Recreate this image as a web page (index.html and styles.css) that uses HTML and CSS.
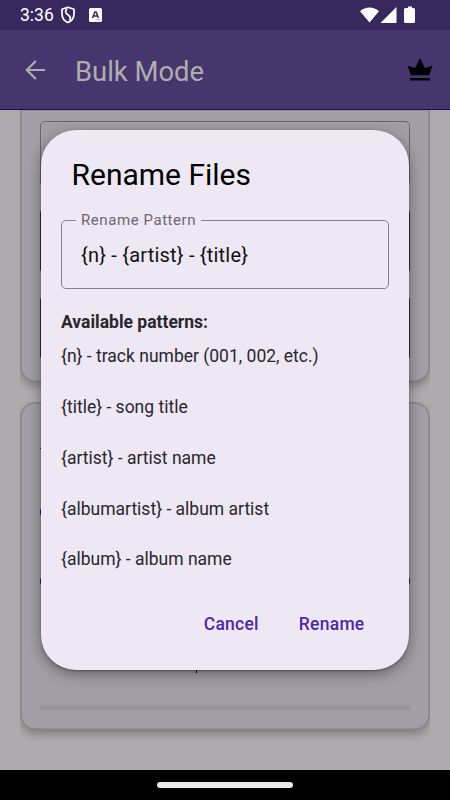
FILE: index.html
```html
<!DOCTYPE html>
<html lang="en">
<head>
<meta charset="utf-8">
<title>Bulk Mode</title>
<link rel="stylesheet" href="styles.css">
</head>
<body>
<div class="screen">
  <header class="status">
    <span class="clock">3:36</span>
    <svg class="shield" width="16" height="18" viewBox="0 0 16 18"><path d="M8 1.200 14 3.300V8c0 4-2.500 7-6 8.600C4.500 15 2 12 2 8V3.300Z" fill="none" stroke="#fff" stroke-width="1.700"/><path d="M7 2.500C4.500 6 6 7.500 8.200 9s3 3 1.300 5.500" fill="none" stroke="#fff" stroke-width="1.700"/></svg>
    <svg class="abox" width="13" height="14" viewBox="0 0 13 14"><rect width="13" height="14" rx="1.500" fill="#fff"/><path d="m3.500 10 2.400-6h1.200l2.400 6M4.500 8h4" fill="none" stroke="#38285e" stroke-width="1.500"/><path d="M7 11.700h4" stroke="#8a819f" stroke-width=".7"/></svg>
    <svg class="signals" width="58" height="20" viewBox="0 0 58 20"><path d="M1 6.200C6.500 1.300 14.500 1.300 20 6.200L10.500 17.500ZM21.500 18 37.500 2v16ZM47 3h2V1.500h4V3h1.500q1.500 0 1.500 1.500v12q0 1.500-1.500 1.500h-8q-1.500 0-1.500-1.500v-12q0-1.500 1.500-1.500Z" fill="#fff"/></svg>
  </header>
  <div class="appbar">
    <svg class="back" width="20" height="20" viewBox="0 0 20 20"><path d="M20 10H2M10.800 1 1.800 10l9 9" fill="none" stroke="#b0adb0" stroke-width="2.200"/></svg>
    <h1>Bulk Mode</h1>
    <svg class="crown" width="26" height="24" viewBox="0 0 26 24"><path d="M.5 7.500 8 10 13 0l5 10 7.500-2.500L22.200 17.300H4ZM3 20h20v2.500H3Z" fill="#000"/></svg>
  </div>
  <main class="content">
    <section class="card files"><div class="row"></div><div class="row dark"></div><div class="row dark"></div></section>
    <section class="card options">
      <div class="dash"></div>
      <div class="dot"></div>
      <div class="dots"><i></i><i></i></div>
      <div class="stem"></div>
      <div class="progress"></div>
    </section>
  </main>
  <footer class="nav"><div class="pill"></div></footer>
</div>
<div class="dialog" role="dialog">
  <h2>Rename Files</h2>
  <fieldset>
    <legend>Rename Pattern</legend>
    <div class="value">{n} - {artist} - {title}</div>
  </fieldset>
  <h3>Available patterns:</h3>
  <ul>
    <li>{n} - track number (001, 002, etc.)</li>
    <li>{title} - song title</li>
    <li>{artist} - artist name</li>
    <li>{albumartist} - album artist</li>
    <li>{album} - album name</li>
  </ul>
  <div class="actions"><button>Cancel</button><button>Rename</button></div>
</div>
</body>
</html>
```

FILE: styles.css
```css
* { box-sizing: border-box; margin: 0; padding: 0; }
body { width: 450px; height: 800px; overflow: hidden; position: relative; font-family: Roboto, sans-serif; }
.screen { height: 800px; display: flex; flex-direction: column; background: #adabad; }
.status { height: 30px; background: #38285e; display: flex; align-items: center; padding: 0 33px 0 20px; color: #fff; }
.clock { font-size: 17.5px; line-height: 30px; width: 40px; }
.abox { margin-left: 13px; }
.signals { margin-left: auto; width: 58px; }
.appbar { height: 80px; background: #47366e; border-bottom: 1px solid #260460; display: flex; align-items: center; padding: 0 17px 0 25px; }
.appbar h1 { font-size: 27.4px; font-weight: 400; line-height: 34px; color: #b0adb0; margin: 4px 0 0 30px; }
.crown { margin-left: auto; }
.content { height: 660px; padding: 0 20px; overflow: hidden; }
.card { background: #a19ea6; border: 1px solid #84828a; border-radius: 16px; box-shadow: inset 0 0 0 .5px #84828a, 0 4px 8px rgba(65, 60, 55, .4); clip-path: inset(0 0 -14px 0); }
.files { height: 272px; border-top: 0; border-radius: 0 0 16px 16px; padding: 11px 19px; display: flex; flex-direction: column; gap: 21px; }
.row { height: 66px; border: 1px solid #68666d; border-radius: 5px; flex-shrink: 0; }
.row.dark { border-color: #302e36; }
.options { height: 328px; margin-top: 20px; padding: 0 19px; }
.dash { height: 1px; width: 3px; background: #222; margin-top: 45px; }
.dot { width: 14px; height: 14px; border-radius: 50%; background: #080070; margin-top: 56px; }
.dots { display: flex; justify-content: space-between; margin-top: 55px; }
.dots i { width: 14px; height: 14px; border-radius: 50%; background: #050050; }
.stem { width: 1px; height: 5px; background: #000; margin: 80px 0 0 156px; }
.progress { height: 5px; background: #9b949e; margin-top: 32px; }
.nav { height: 30px; background: #000; display: flex; justify-content: center; align-items: center; }
.pill { width: 136px; height: 6px; border-radius: 3px; background: #e9e9e9; }
.dialog { position: absolute; left: 41px; top: 130px; width: 368px; height: 540px; background: #eee8f4; border-radius: 35px; box-shadow: 0 4px 14px rgba(0, 0, 0, .38), 0 1px 2px rgba(0, 0, 0, .3); padding: 25px 20px 0; }
h2 { font-size: 30px; font-weight: 400; line-height: 40px; padding-left: 10.5px; color: #000; }
fieldset { height: 78px; margin-top: 16px; border: 1px solid #858089; border-radius: 5px; padding: 0 19px; min-width: 0; }
legend { font-size: 15px; line-height: 18px; letter-spacing: .57px; color: #6c6772; padding: 0 5px; margin-left: -5px; }
.value { font-size: 20px; line-height: 30px; margin-top: 11px; letter-spacing: .2px; color: #111; white-space: nowrap; }
h3 { font-size: 17.5px; line-height: 20px; font-weight: 700; margin-top: 23px; color: #29262e; }
ul { list-style: none; }
li { font-size: 17.5px; line-height: 50.850px; color: #29262e; white-space: nowrap; }
h3 + ul { margin-top: -1px; }
.actions { display: flex; justify-content: flex-end; gap: 40px; padding-right: 24.500px; margin-top: 26.700px; }
button { border: 0; background: none; font: 500 17.5px/24px Roboto, sans-serif; letter-spacing: .25px; color: #5028a4; }
```
